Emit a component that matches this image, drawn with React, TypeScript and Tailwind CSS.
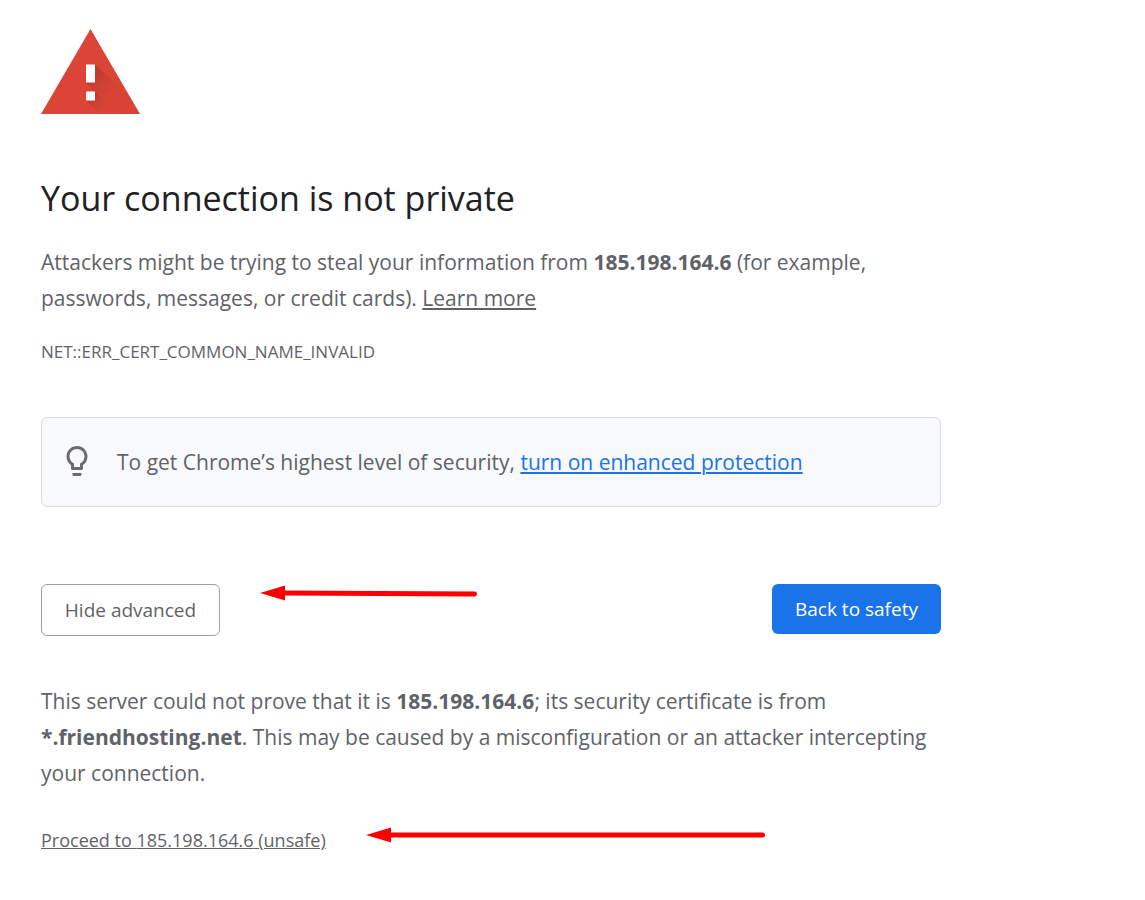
import React from "react";

const HOST = "185.198.164.6";

function WarningIcon() {
  return (
    <svg width="99" height="85" viewBox="0 0 99 85" className="block" aria-hidden="true">
      <defs>
        <linearGradient id="shade" x1="50" y1="42" x2="73" y2="65" gradientUnits="userSpaceOnUse">
          <stop offset="0" stopColor="#b83a2e" />
          <stop offset="1" stopColor="#d04033" stopOpacity="0.2" />
        </linearGradient>
        <linearGradient id="shade-dot" x1="50" y1="66" x2="64" y2="80" gradientUnits="userSpaceOnUse">
          <stop offset="0" stopColor="#b83a2e" />
          <stop offset="1" stopColor="#d04033" stopOpacity="0.2" />
        </linearGradient>
      </defs>
      <path d="M49.5 0 99 85H0z" fill="#db4437" />
      <path d="M54 35.500 87 65 99 85H76L45 53.500z" fill="url(#shade)" />
      <path d="M54 62.500 76 85H58.500L45 71.500z" fill="url(#shade-dot)" />
      <path d="M45 35.500h9v18h-9zM45 62.500h9v9h-9z" fill="#fff" />
    </svg>
  );
}

function BulbIcon() {
  return (
    <svg width="36" height="36" viewBox="0 0 24 24" className="mb-0.5 shrink-0" fill="#6b6b6b" aria-hidden="true">
      <path d="M9 21c0 .55.45 1 1 1h4c.55 0 1-.45 1-1v-1H9v1zm3-19C8.140 2 5 5.140 5 9c0 2.380 1.190 4.470 3 5.740V17c0 .55.45 1 1 1h6c.55 0 1-.45 1-1v-2.260c1.810-1.270 3-3.360 3-5.740 0-3.860-3.140-7-7-7zm2.850 11.100l-.85.6V16h-4v-2.300l-.85-.6C7.800 12.160 7 10.630 7 9c0-2.760 2.240-5 5-5s5 2.240 5 5c0 1.630-.8 3.160-2.150 4.100z" />
    </svg>
  );
}

function Arrow({ length, tilt = 0 }: { length: number; tilt?: number }) {
  return (
    <svg width={length} height="18" viewBox={`0 0 ${length} 18`} className="shrink-0" aria-hidden="true">
      <path d="M0 9 25 1.500v15z" fill="#f00" />
      <path
        d={`M24 9 ${length - 2.5} ${9 + tilt}`}
        stroke="#f00"
        strokeWidth="5"
        strokeLinecap="round"
      />
    </svg>
  );
}

export default function App() {
  return (
    <div className="min-h-screen bg-white font-['Open_Sans',sans-serif] text-[#5f6368]">
      <main className="ml-[41px] max-w-[900px] pt-[29px] pb-11">
        <WarningIcon />

        <h1 className="mt-[62px] text-[34px] leading-[44px] text-[#202124]">
          Your connection is not private
        </h1>
        <p className="mt-6 text-[21px] leading-9">
          Attackers might be trying to steal your information from <strong>{HOST}</strong> (for
          example, passwords, messages, or credit cards).{" "}
          <a href="#learn" className="underline">
            Learn more
          </a>
        </p>
        <div className="mt-6 text-[17px] leading-6">NET::ERR_CERT_COMMON_NAME_INVALID</div>

        <div className="mt-[53px] flex h-[90px] items-center gap-[22px] rounded-md border border-[#dadce0] bg-[#f8f9fa] px-[17px]">
          <BulbIcon />
          <p className="text-[21px] leading-9">
            To get Chrome’s highest level of security,{" "}
            <a href="#enhanced" className="text-[#1a73e8] underline">
              turn on enhanced protection
            </a>
          </p>
        </div>

        <div className="mt-[77px] flex items-start">
          <button
            type="button"
            className="mr-10 h-[52px] w-[179px] rounded-md border border-[#9aa0a6] text-[19px]"
          >
            Hide advanced
          </button>
          <Arrow length={217} tilt={1} />
          <button
            type="button"
            className="ml-auto h-[50px] w-[169px] rounded-md bg-[#1a73e8] text-[19px] text-white"
          >
            Back to safety
          </button>
        </div>

        <p className="mt-[47px] text-[21px] leading-9">
          This server could not prove that it is <strong>{HOST}</strong>; its security certificate
          is from <strong>*.friendhosting.net</strong>. This may be caused by a misconfiguration or
          an attacker intercepting your connection.
        </p>
        <div className="mt-[35px] flex items-start gap-10">
          <a href="#proceed" className="text-[18px] leading-7 underline">
            Proceed to {HOST} (unsafe)
          </a>
          <Arrow length={399} />
        </div>
      </main>
    </div>
  );
}
